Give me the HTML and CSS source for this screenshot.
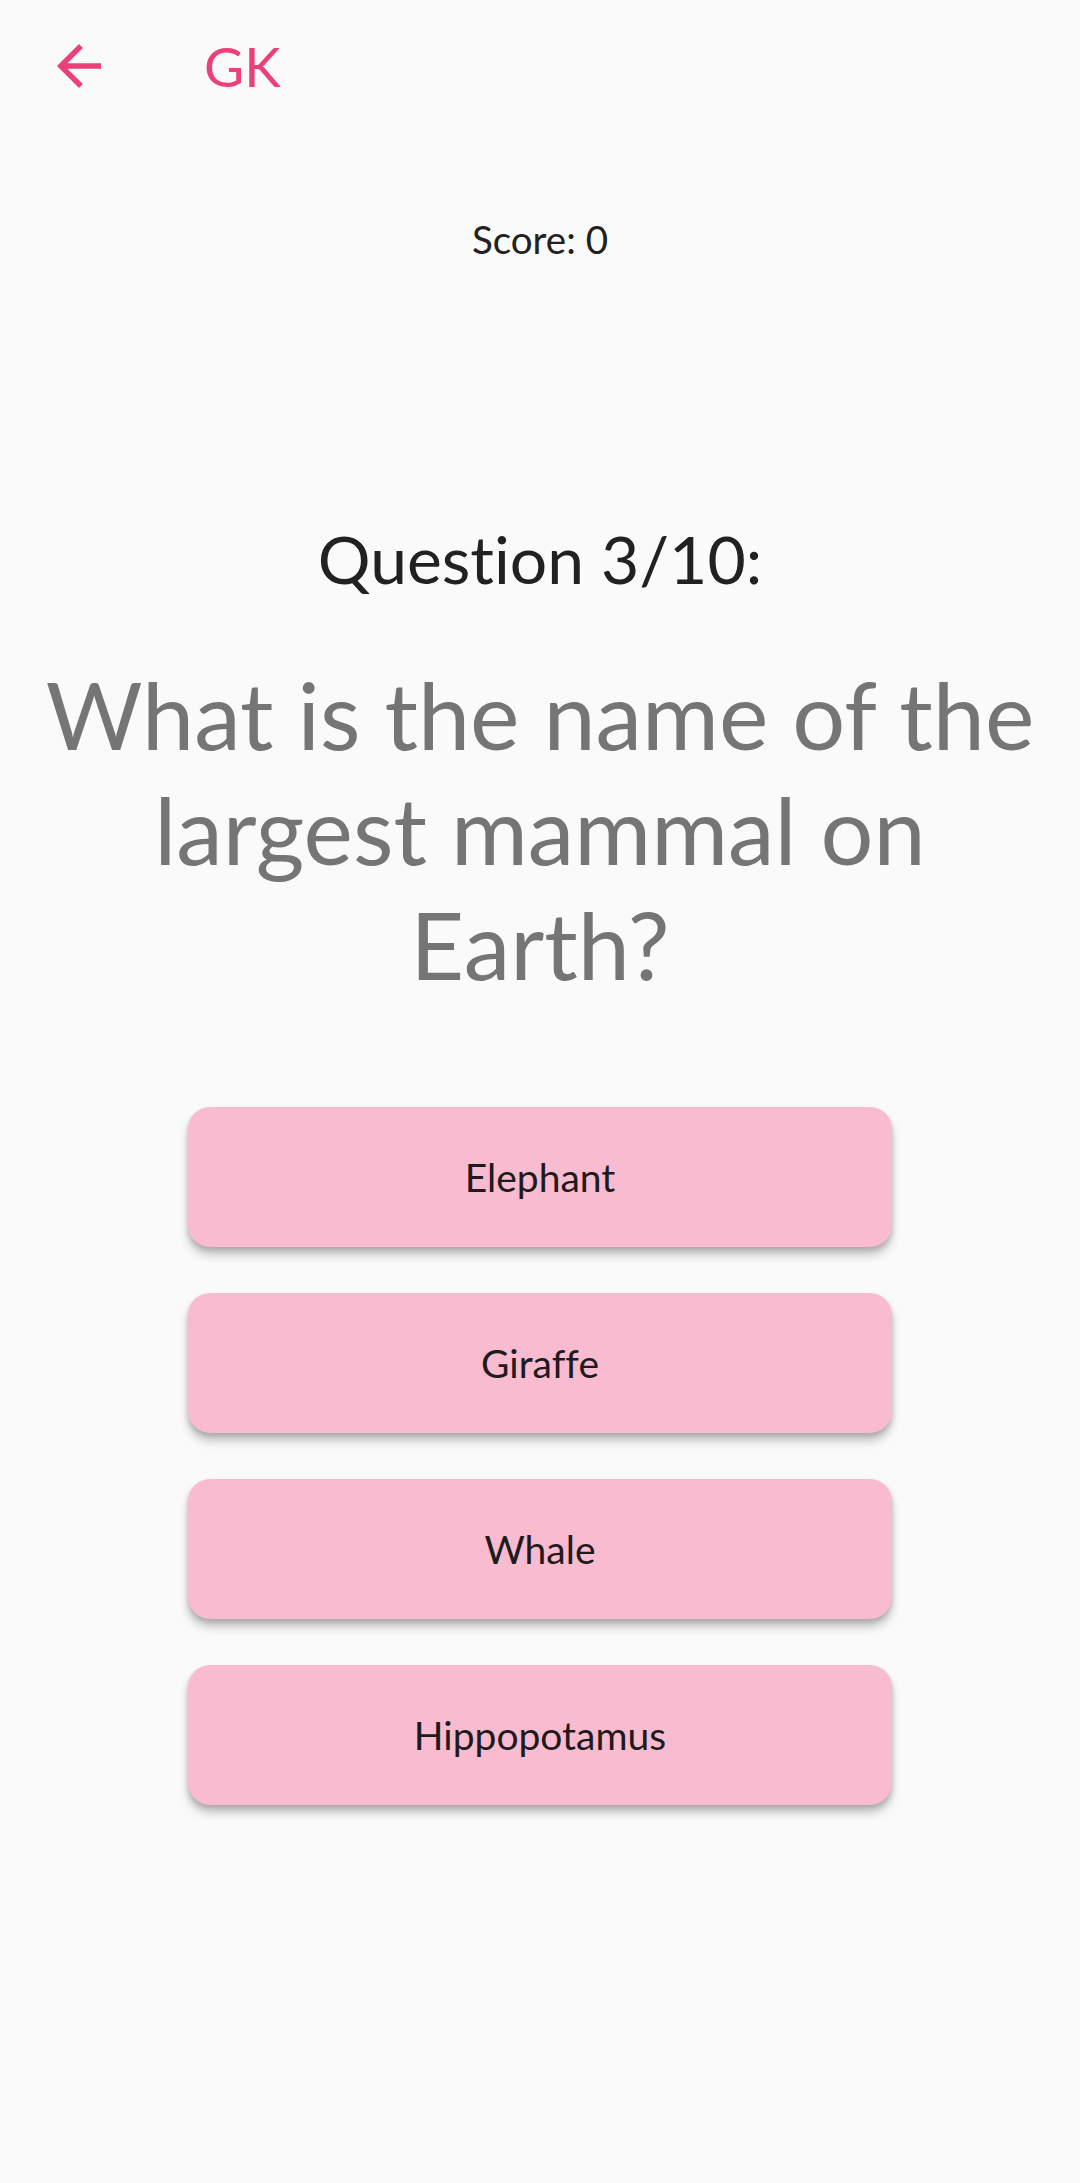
FILE: index.html
```html
<!DOCTYPE html>
<html lang="en">
<head>
<meta charset="utf-8">
<title>GK Quiz</title>
<link rel="stylesheet" href="styles.css">
</head>
<body>
<div class="screen">
  <header class="appbar">
    <button class="back" aria-label="Back">
      <svg viewBox="0 0 24 24" width="66" height="66"><path d="M20 11H7.830l5.590-5.590L12 4l-8 8 8 8 1.410-1.410L7.830 13H20v-2z" fill="currentColor"/></svg>
    </button>
    <h1 class="title">GK</h1>
  </header>
  <main class="content">
    <div class="score">Score: 0</div>
    <div class="qlabel">Question 3/10:</div>
    <div class="qtext">What is the name of the largest mammal on Earth?</div>
    <div class="answers">
      <button class="answer">Elephant</button>
      <button class="answer">Giraffe</button>
      <button class="answer">Whale</button>
      <button class="answer">Hippopotamus</button>
    </div>
  </main>
</div>
</body>
</html>
```
FILE: styles.css
```css
html, body {
  margin: 0;
  padding: 0;
  background: #fafafa;
}
body {
  font-family: Lato, "Noto Sans", sans-serif;
  font-variant-ligatures: none;
  width: 1080px;
  height: 2183px;
  overflow: hidden;
}
.screen {
  display: flex;
  flex-direction: column;
}
.appbar {
  display: flex;
  align-items: center;
  padding-top: 33px;
  height: 66px;
  padding-left: 46px;
}
.back {
  width: 66px;
  height: 66px;
  padding: 0;
  border: 0;
  background: none;
  color: #ec407a;
  display: flex;
}
.title {
  margin: 0 0 0 92px;
  font-size: 55px;
  line-height: 66px;
  font-weight: 400;
  color: #ec407a;
}
.content {
  display: flex;
  flex-direction: column;
  align-items: center;
}
.score {
  margin-top: 117px;
  font-size: 38.5px;
  line-height: 46px;
  color: #212121;
}
.qlabel {
  margin-top: 257px;
  font-size: 66px;
  line-height: 80px;
  color: #212121;
}
.qtext {
  margin-top: 58px;
  padding: 0 40px;
  font-size: 93.5px;
  line-height: 115px;
  color: #757575;
  text-align: center;
}
.answers {
  margin-top: 105px;
  display: flex;
  flex-direction: column;
  gap: 46px;
}
.answer {
  width: 704px;
  height: 140px;
  border: 0;
  border-radius: 22px;
  background: #f8bbd0;
  font-family: Lato, "Noto Sans", sans-serif;
  font-variant-ligatures: none;
  font-size: 39px;
  color: #1f1a1c;
  box-shadow: 0 8px 10px rgba(0,0,0,0.22), 0 3px 5px rgba(0,0,0,0.14);
}
```
